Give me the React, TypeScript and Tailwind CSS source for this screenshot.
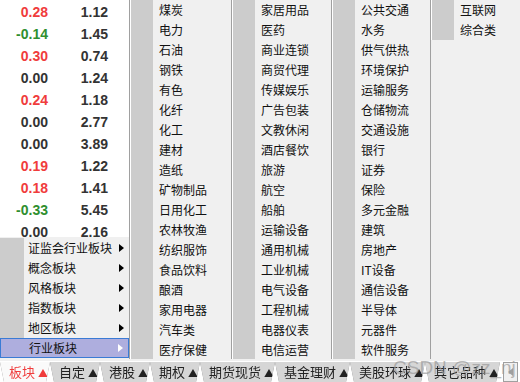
import React from 'react';

type Quote = { chg: string; val: string; tone: 'up' | 'down' | 'flat' };

const quotes: Quote[] = [
  { chg: '0.28', val: '1.12', tone: 'up' },
  { chg: '-0.14', val: '1.45', tone: 'down' },
  { chg: '0.30', val: '0.74', tone: 'up' },
  { chg: '0.00', val: '1.24', tone: 'flat' },
  { chg: '0.24', val: '1.18', tone: 'up' },
  { chg: '0.00', val: '2.77', tone: 'flat' },
  { chg: '0.00', val: '3.89', tone: 'flat' },
  { chg: '0.19', val: '1.22', tone: 'up' },
  { chg: '0.18', val: '1.41', tone: 'up' },
  { chg: '-0.33', val: '5.45', tone: 'down' },
  { chg: '0.00', val: '2.16', tone: 'flat' }
];

const toneClass = {
  up: 'text-[#f03c3c]',
  down: 'text-[#2f8f2f]',
  flat: 'text-[#333333]'
};

const boardMenu = ['证监会行业板块', '概念板块', '风格板块', '指数板块', '地区板块', '行业板块'];

const industryColumns: { width: string; items: string[] }[] = [
  {
    width: 'w-[102px]',
    items: ['煤炭', '电力', '石油', '钢铁', '有色', '化纤', '化工', '建材', '造纸', '矿物制品', '日用化工', '农林牧渔', '纺织服饰', '食品饮料', '酿酒', '家用电器', '汽车类', '医疗保健']
  },
  {
    width: 'w-[100px]',
    items: ['家居用品', '医药', '商业连锁', '商贸代理', '传媒娱乐', '广告包装', '文教休闲', '酒店餐饮', '旅游', '航空', '船舶', '运输设备', '通用机械', '工业机械', '电气设备', '工程机械', '电器仪表', '电信运营']
  },
  {
    width: 'w-[99px]',
    items: ['公共交通', '水务', '供气供热', '环境保护', '运输服务', '仓储物流', '交通设施', '银行', '证券', '保险', '多元金融', '建筑', '房地产', 'IT设备', '通信设备', '半导体', '元器件', '软件服务']
  }
];

const tabs = [
  { label: '板块', w: 'w-[50px]', active: true },
  { label: '自定', w: 'w-[50px]' },
  { label: '港股', w: 'w-[50px]' },
  { label: '期权', w: 'w-[50px]' },
  { label: '期货现货', w: 'w-[75px]' },
  { label: '基金理财', w: 'w-[75px]' },
  { label: '美股环球', w: 'w-[75px]' },
  { label: '其它品种', w: 'w-[75px]' }
];

const Arrow: React.FC<{ light?: boolean }> = ({ light }) => (
  <svg width="5" height="8" viewBox="0 0 5 8" className="shrink-0">
    <path d="M0 0 L5 4 L0 8 Z" fill={light ? '#ffffff' : '#000000'} />
  </svg>
);

const MenuColumn: React.FC<{ width: string; items: string[]; full?: boolean }> = ({ width, items, full = true }) => (
  <div className={`${width} h-full flex border-l border-[#a0a0a0]`}>
    <div className={`flex w-full border-l border-white bg-[#f0f0f0] ${full ? 'h-full' : 'h-[40px]'}`}>
      <div className="w-[22px] bg-[#cccccc] shrink-0" />
      <div className="flex flex-col pl-[6px]">
        {items.map((item) => (
          <div key={item} className="h-[20px] leading-[20px] text-[12px] text-[#111111] whitespace-nowrap">
            {item}
          </div>
        ))}
      </div>
    </div>
  </div>
);

export default function App() {
  return (
    <div className="relative w-[520px] h-[382px] overflow-hidden bg-[#f0f0f0] flex flex-col font-['Noto_Sans_CJK_SC',sans-serif]">
      {/* Upper area: quote table + menus */}
      <div className="flex h-[361px]">
        <div className="w-[129px] flex flex-col shrink-0">
          {/* Quote table */}
          <div className="h-[237px] bg-white overflow-hidden pt-[1px] font-['Liberation_Sans',sans-serif] font-bold text-[14px]">
            {quotes.map((q, i) => (
              <div key={i} className="flex h-[22px] items-center">
                <span className={`w-[48px] text-right ${toneClass[q.tone]}`}>{q.chg}</span>
                <span className="w-[60px] text-right text-[#333333]">{q.val}</span>
              </div>
            ))}
          </div>

          {/* Board menu */}
          <div className="flex-1 flex flex-col pt-[1px] bg-[#f0f0f0]">
            {boardMenu.map((item, i) => {
              const selected = i === boardMenu.length - 1;
              return (
                <div
                  key={item}
                  className={`flex h-[20px] items-center ${
                    selected ? 'bg-[#aeaede] border border-[#3a7bd5]' : ''
                  }`}
                >
                  <div className={`w-[24px] h-full shrink-0 ${selected ? '' : 'bg-[#cccccc]'}`} />
                  <span className="pl-[4px] text-[12px] text-[#111111] whitespace-nowrap flex-1">{item}</span>
                  <div className="pr-[5px]">
                    <Arrow light={selected} />
                  </div>
                </div>
              );
            })}
          </div>
        </div>

        {/* Industry submenu */}
        <div className="flex h-[359px] overflow-hidden">
          {industryColumns.map((col, i) => (
            <MenuColumn key={i} width={col.width} items={col.items} />
          ))}
          <MenuColumn width="w-[88px]" items={['互联网', '综合类']} full={false} />
        </div>
      </div>

      {/* Bottom tabs */}
      <div className="flex h-[21px] bg-white pt-[1px]">
        {tabs.map((t) => (
          <div key={t.label} className={`${t.w} h-full [filter:drop-shadow(0_0_0.5px_#777777)]`}>
            <div
              className={`w-full h-full flex items-center pl-[9px] gap-[3px] text-[13px] [clip-path:polygon(0_0,100%_0,calc(100%_-_4px)_100%,4px_100%)] ${
                t.active ? 'bg-[#fafafa] text-[#f03c3c]' : 'bg-[#d6d6d6] text-[#222222]'
              }`}
            >
              <span className="whitespace-nowrap">{t.label}</span>
              <span className="text-[10px]">▲</span>
            </div>
          </div>
        ))}
        <div className="ml-[3px] w-[15px] h-full border border-[#a0a0a0] bg-[#f0f0f0] flex items-center justify-center">
          <svg width="5" height="8" viewBox="0 0 5 8">
            <path d="M5 0 L0 4 L5 8 Z" fill="#a0a0a0" />
          </svg>
        </div>
      </div>

      {/* Watermark */}
      <div className="absolute left-[393px] top-[354px] text-[19px] text-[#9a9a9a]/70 font-['Liberation_Sans',sans-serif] whitespace-nowrap pointer-events-none">
        CSDN @zz_nj
      </div>
    </div>
  );
}
